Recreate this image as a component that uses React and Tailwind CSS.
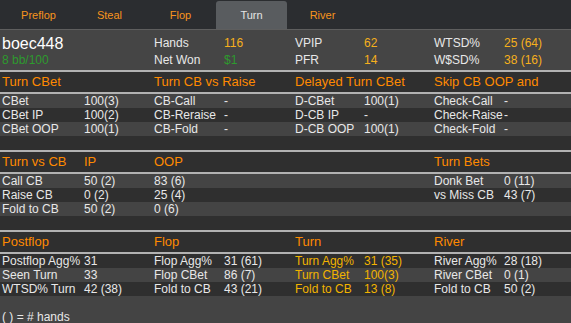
import React from "react";

const GRID = "grid grid-cols-[82px_70px_70px_71px_69px_70px_70px_1fr] pl-[2px]";

const tabs = ["Preflop", "Steal", "Flop", "Turn", "River"];

const sections = [
  {
    heads: [
      [0, "Turn CBet"],
      [2, "Turn CB vs Raise"],
      [4, "Delayed Turn CBet"],
      [6, "Skip CB OOP and"],
    ],
    startLight: true,
    rows: [
      ["CBet", "100(3)", "CB-Call", "-", "D-CBet", "100(1)", "Check-Call", "-"],
      ["CBet IP", "100(2)", "CB-Reraise", "-", "D-CB IP", "-", "Check-Raise", "-"],
      ["CBet OOP", "100(1)", "CB-Fold", "-", "D-CB OOP", "100(1)", "Check-Fold", "-"],
    ],
  },
  {
    heads: [
      [0, "Turn vs CB"],
      [1, "IP"],
      [2, "OOP"],
      [6, "Turn Bets"],
    ],
    startLight: true,
    rows: [
      ["Call CB", "50 (2)", "83 (6)", "", "", "", "Donk Bet", "0 (11)"],
      ["Raise CB", "0 (2)", "25 (4)", "", "", "", "vs Miss CB", "43 (7)"],
      ["Fold to CB", "50 (2)", "0 (6)", "", "", "", "", ""],
    ],
  },
  {
    heads: [
      [0, "Postflop"],
      [2, "Flop"],
      [4, "Turn"],
      [6, "River"],
    ],
    startLight: false,
    gold: [4, 5],
    rows: [
      ["Postflop Agg%", "31", "Flop Agg%", "31 (61)", "Turn Agg%", "31 (35)", "River Agg%", "28 (18)"],
      ["Seen Turn", "33", "Flop CBet", "86 (7)", "Turn CBet", "100(3)", "River CBet", "0 (1)"],
      ["WTSD% Turn", "42 (38)", "Fold to CB", "43 (21)", "Fold to CB", "13 (8)", "Fold to CB", "50 (2)"],
    ],
  },
];

const Section = ({ sec, last }) => (
  <div>
    <div className="h-[2px] bg-[#b2b2b2]" />
    <div className={`${GRID} h-[20px] items-center text-[13px] text-[#ff8a00]`}>
      {sec.heads.map(([col, text]) => (
        <div
          key={text}
          className="whitespace-nowrap"
          style={{ gridColumnStart: col + 1 }}
        >
          {text}
        </div>
      ))}
    </div>
    <div className="h-[2px] bg-[#b2b2b2]" />
    {sec.rows.map((r, i) => {
      const light = sec.startLight ? i % 2 === 0 : i % 2 === 1;
      return (
        <div
          key={i}
          className={`${GRID} h-[14px] items-center text-[12px] leading-[14px] ${
            light ? "bg-[#444444]" : "bg-[#2f2f2f]"
          }`}
        >
          {r.map((c, j) => (
            <div
              key={j}
              className={`whitespace-nowrap ${
                sec.gold && sec.gold.includes(j) ? "text-[#f2b400]" : "text-[#e8e8e8]"
              }`}
            >
              {c}
            </div>
          ))}
        </div>
      );
    })}
    {!last && <div className="h-[14px]" />}
  </div>
);

export default function App() {
  return (
    <div
      className="w-[571px] h-[323px] overflow-hidden bg-[#2f2f2f] text-[#e8e8e8]"
      style={{ fontFamily: '"Liberation Sans", Arial, sans-serif' }}
    >
      <div className="h-[29px] bg-[#2b2d30] flex items-end pl-[3px]">
        {tabs.map((t) => (
          <div
            key={t}
            className={`w-[71px] h-[28px] flex items-center justify-center text-[11px] rounded-t-[3px] ${
              t === "Turn" ? "bg-[#595c5f] text-[#e4e4e4]" : "text-[#f7941d]"
            }`}
          >
            {t}
          </div>
        ))}
      </div>
      <div className="h-px bg-[#5e5e5e]" />
      <div className="h-[40px] bg-[#454545] pt-[4px]">
        <div className={`${GRID} h-[17px] items-center text-[12px]`}>
          <div className="col-span-2 text-[16px] text-white leading-[17px]">boec448</div>
          <div>Hands</div>
          <div className="text-[#f5b01c]">116</div>
          <div>VPIP</div>
          <div className="text-[#f5b01c]">62</div>
          <div>WTSD%</div>
          <div className="text-[#f5b01c]">25 (64)</div>
        </div>
        <div className={`${GRID} h-[15px] items-center text-[12px]`}>
          <div className="col-span-2 text-[#2e9a2e]">8 bb/100</div>
          <div>Net Won</div>
          <div className="text-[#2e9a2e]">$1</div>
          <div>PFR</div>
          <div className="text-[#f5b01c]">14</div>
          <div>W$SD%</div>
          <div className="text-[#f5b01c]">38 (16)</div>
        </div>
      </div>
      {sections.map((s, i) => (
        <Section key={i} sec={s} last={i === sections.length - 1} />
      ))}
      <div className="bg-[#444444] h-[28px] pl-[2px] pt-[14px] text-[12px] leading-[14px]">
        ( ) = # hands
      </div>
    </div>
  );
}
